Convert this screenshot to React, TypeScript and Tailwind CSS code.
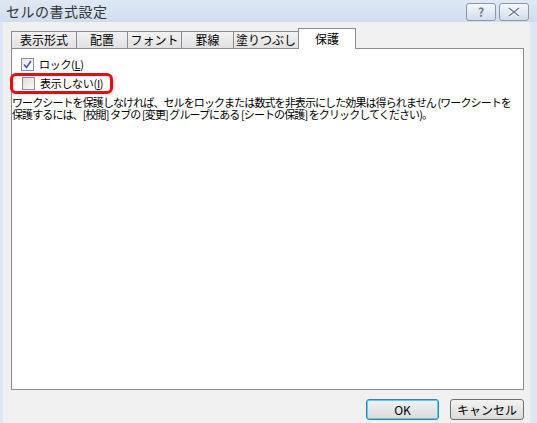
import React from "react"

const font = { fontFamily: '"Noto Sans CJK JP", "Liberation Sans", sans-serif' }

const tabs = ["表示形式", "配置", "フォント", "罫線", "塗りつぶし"]
const tabWidths = ["w-[66px]", "w-[52px]", "w-[55px]", "w-[53px]", "w-[66px]"]

const TitleButton = ({ children }: { children: React.ReactNode }) => (
    <div className="w-[30px] h-[18px] rounded-[3px] border border-[#8a98ab] bg-gradient-to-b from-[#f4f7fb] to-[#d3dde9] flex items-center justify-center">
        {children}
    </div>
)

export default function App() {
    return (
        <div className="w-[537px] h-[423px] flex flex-col bg-[#dde7f3] overflow-hidden text-[12px] text-black whitespace-nowrap" style={font}>
            {/* title bar */}
            <div className="h-[22px] flex items-center justify-between pl-[6px] pr-[8px] bg-gradient-to-b from-[#dfe9f5] to-[#cfdded]">
                <span className="text-[14px] text-[#333] leading-none tracking-[0.5px]">セルの書式設定</span>
                <div className="flex gap-[3px] pt-[1px]">
                    <TitleButton>
                        <span className="text-[12px] font-bold text-[#6a7b92] leading-none">?</span>
                    </TitleButton>
                    <TitleButton>
                        <svg width="14" height="10" viewBox="0 0 14 10">
                            <path d="M2 1 L12 9 M12 1 L2 9" stroke="#fff" strokeWidth="3.2" />
                            <path d="M2 1 L12 9 M12 1 L2 9" stroke="#6a7b92" strokeWidth="1.6" />
                        </svg>
                    </TitleButton>
                </div>
            </div>

            {/* client */}
            <div className="flex-1 ml-[3px] mr-[7px] bg-[#f0f0f0] flex flex-col">
                <div className="pl-[8px] pr-[6px] pt-[5px]">
                    <div className="flex items-end h-[21px]">
                        {tabs.map((t, i) => (
                            <div key={t} className={`${tabWidths[i]} h-[17px] border border-b-0 border-[#898c95] -mr-[1px] bg-gradient-to-b from-[#f2f2f2] to-[#e1e1e1] flex items-center justify-center leading-none text-[12px]`}>
                                {t}
                            </div>
                        ))}
                        <div className="w-[58px] h-[21px] border border-b-0 border-[#898c95] bg-white flex items-center justify-center leading-none text-[12px] relative top-[1px] z-10">
                            保護
                        </div>
                    </div>
                    <div className="h-[342px] border border-[#898c95] bg-white pl-[9px] pt-[8px]">
                        <div className="flex items-center gap-[5px] h-[14px]">
                            <div className="w-[13px] h-[13px] border border-[#8f8f8f] bg-gradient-to-br from-[#e6e6e6] to-[#ffffff] flex items-center justify-center">
                                <svg width="9" height="9" viewBox="0 0 9 9">
                                    <path d="M1 4.5 L3.5 7.5 L8 1" stroke="#3a5ba8" strokeWidth="1.6" fill="none" />
                                </svg>
                            </div>
                            <span className="leading-none text-[11px] tracking-[-0.3px]">ロック(<span className="underline">L</span>)</span>
                        </div>
                        <div className="mt-[2px] h-[21px] -ml-[11px] w-[103px] border-[3px] border-[#ff0000] rounded-[6px] flex items-center pl-[9px] gap-[5px]">
                            <div className="w-[13px] h-[13px] border border-[#8f8f8f] bg-gradient-to-br from-[#dcdcdc] to-[#fafafa] shrink-0" />
                            <span className="leading-none text-[11px] tracking-[-0.3px]">表示しない(<span className="underline">I</span>)</span>
                        </div>
                        <p className="mt-[2px] -ml-[9px] leading-[12px] text-[11px] tracking-[-0.9px]">
                            ワークシートを保護しなければ、セルをロックまたは数式を非表示にした効果は得られません (ワークシートを
                            <br />
                            保護するには、[校閲] タブの [変更] グループにある [シートの保護] をクリックしてください)。
                        </p>
                    </div>
                </div>

                {/* buttons */}
                <div className="flex justify-end gap-[11px] pr-[6px] pt-[9px]">
                    <button className="w-[73px] h-[21px] rounded-[3px] border border-[#3c7fb1] shadow-[inset_0_0_0_1px_#48d3fb] bg-gradient-to-b from-[#f2f2f2] to-[#dadada] text-[12px] leading-none">
                        OK
                    </button>
                    <button className="w-[74px] h-[21px] rounded-[3px] border border-[#707070] bg-gradient-to-b from-[#f2f2f2] to-[#dadada] text-[12px] leading-none">
                        キャンセル
                    </button>
                </div>
            </div>
        </div>
    )
}
